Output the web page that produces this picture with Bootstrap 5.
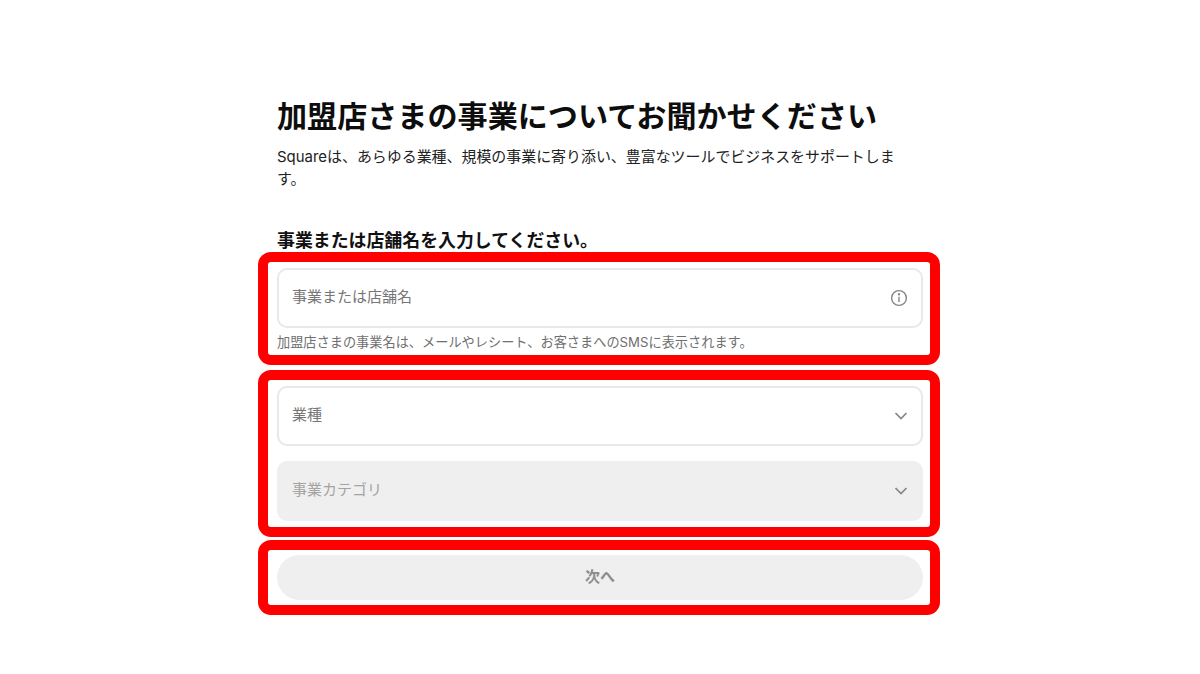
<!DOCTYPE html>
<html lang="ja">
<head>
<meta charset="utf-8">
<title>事業について</title>
<link href="https://cdn.jsdelivr.net/npm/bootstrap@5.3.0/dist/css/bootstrap.min.css" rel="stylesheet">
<style>
html, body { height: 100%; }
body { font-family: "Inter", "Noto Sans CJK JP", sans-serif; color: #111; background: #fff; overflow: hidden; }
.page-col { width: 682px; margin-left: 258px; padding-top: 99px; }
.intro { padding-left: 19px; padding-right: 40px; }
.page-title { font-size: 30.1px; line-height: 34px; font-weight: 700; margin: 0 0 13px; color: #0d0d0d; white-space: nowrap; }
.page-lead { font-size: 14.95px; line-height: 22px; margin: 0 0 40px; color: #222; }
.field-heading { font-size: 17.9px; line-height: 22px; font-weight: 700; margin: 0; white-space: nowrap; }
.mark-box { border: 10px solid #f00; border-radius: 13px; padding-left: 9px; padding-right: 7px; }
.box-a { height: 113px; padding-top: 6px; margin-bottom: 5px; }
.box-b { height: 167px; padding-top: 6px; margin-bottom: 3px; }
.box-c { height: 75px; padding-top: 5px; }
.fake-field { height: 60px; border: 2px solid #e8e8e8; border-radius: 10px; padding: 0 13px; font-size: 15px; color: #767676; background: #fff; }
.fake-field.has-chevron { padding-right: 11px; }
.fake-field.is-off { background: #efefef; border-color: #efefef; color: #a3a3a3; margin-top: 15px; }
.field-label { padding-bottom: 2px; }
.field-hint { font-size: 13.2px; line-height: 16px; color: #6f6f6f; margin: 6px 0 0; white-space: nowrap; }
.next-pill { height: 45px; border-radius: 23px; background: #efefef; font-size: 15px; font-weight: 700; color: #8c8c8c; }
.fld-icon { width: 18px; height: 18px; flex: none; }
</style>
</head>
<body>
<main class="page-col">
  <div class="intro">
    <h1 class="page-title">加盟店さまの事業についてお聞かせください</h1>
    <p class="page-lead">Squareは、あらゆる業種、規模の事業に寄り添い、豊富なツールでビジネスをサポートします。</p>
    <h2 class="field-heading">事業または店舗名を入力してください。</h2>
  </div>
  <div class="mark-box box-a">
    <div class="fake-field d-flex align-items-center justify-content-between">
      <span class="field-label">事業または店舗名</span>
      <svg class="fld-icon" viewBox="0 0 18 18" fill="none" stroke="#858585" stroke-width="1.4"><circle cx="9" cy="9" r="7.4"/><path d="M9 7.800v5.200"/><circle cx="9" cy="5.200" r=".5" fill="#858585"/></svg>
    </div>
    <p class="field-hint">加盟店さまの事業名は、メールやレシート、お客さまへのSMSに表示されます。</p>
  </div>
  <div class="mark-box box-b">
    <div class="fake-field has-chevron d-flex align-items-center justify-content-between">
      <span class="field-label">業種</span>
      <svg class="fld-icon" viewBox="0 0 18 18" fill="none" stroke="#858585" stroke-width="1.7"><path d="M3.500 6 9 11.500 14.500 6"/></svg>
    </div>
    <div class="fake-field has-chevron is-off d-flex align-items-center justify-content-between">
      <span class="field-label">事業カテゴリ</span>
      <svg class="fld-icon" viewBox="0 0 18 18" fill="none" stroke="#858585" stroke-width="1.7"><path d="M3.500 6 9 11.500 14.500 6"/></svg>
    </div>
  </div>
  <div class="mark-box box-c">
    <div class="next-pill d-flex align-items-center justify-content-center">次へ</div>
  </div>
</main>
<script src="https://cdn.jsdelivr.net/npm/bootstrap@5.3.0/dist/js/bootstrap.bundle.min.js"></script>
</body>
</html>
